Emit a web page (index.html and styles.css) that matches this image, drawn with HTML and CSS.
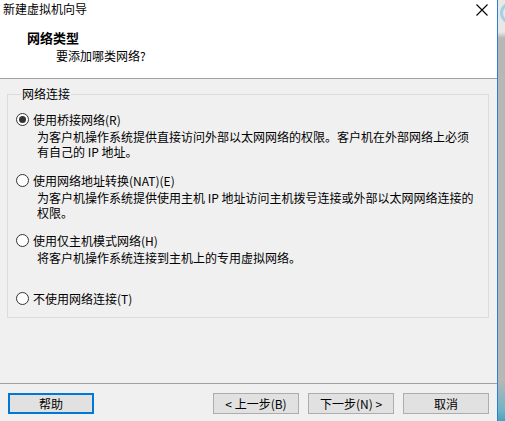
FILE: index.html
```html
<!DOCTYPE html>
<html lang="zh-CN">
<head>
<meta charset="utf-8">
<title>新建虚拟机向导</title>
<link rel="stylesheet" href="styles.css">
</head>
<body>
<div class="screen">
  <div class="window">
    <div class="header">
      <div class="titlebar">
        <span class="title">新建虚拟机向导</span>
        <span class="close">
          <svg width="12" height="12" viewBox="0 0 12 12"><path d="M0.5 0.5 L11.5 11.5 M11.5 0.5 L0.5 11.5" stroke="#000" stroke-width="1.1" fill="none"/></svg>
        </span>
      </div>
      <div class="heading">网络类型</div>
      <div class="subheading">要添加哪类网络?</div>
    </div>
    <div class="main">
      <fieldset class="group">
        <legend class="legend">网络连接</legend>
        <div class="option">
          <div class="opt-label"><span class="radio checked"></span>使用桥接网络(R)</div>
          <div class="desc">为客户机操作系统提供直接访问外部以太网网络的权限。客户机在外部网络上必须<br>有自己的 IP 地址。</div>
        </div>
        <div class="option o2">
          <div class="opt-label"><span class="radio"></span>使用网络地址转换(NAT)(E)</div>
          <div class="desc">为客户机操作系统提供使用主机 IP 地址访问主机拨号连接或外部以太网网络连接的<br>权限。</div>
        </div>
        <div class="option o3">
          <div class="opt-label"><span class="radio"></span>使用仅主机模式网络(H)</div>
          <div class="desc">将客户机操作系统连接到主机上的专用虚拟网络。</div>
        </div>
        <div class="option o4">
          <div class="opt-label"><span class="radio"></span>不使用网络连接(T)</div>
        </div>
      </fieldset>
    </div>
    <div class="footer">
      <button class="btn focused">帮助</button>
      <div class="spacer"></div>
      <button class="btn">&lt; 上一步(B)</button>
      <button class="btn">下一步(N) &gt;</button>
      <button class="btn">取消</button>
    </div>
  </div>
  <div class="desk"><div class="ring"></div></div>
</div>
</body>
</html>
```

FILE: styles.css
```css
* { box-sizing: border-box; }
html, body { margin: 0; padding: 0; }
body {
  width: 505px;
  height: 421px;
  overflow: hidden;
  font-family: "Noto Sans CJK SC", "Microsoft YaHei", sans-serif;
  font-size: 12px;
  color: #000;
}
.screen { display: flex; width: 505px; height: 421px; }
.window {
  width: 498px;
  height: 421px;
  border-right: 1px solid #2a7fd4;
  display: flex;
  flex-direction: column;
  background: #f0f0f0;
}
.header {
  height: 79px;
  background: #fff;
  border-bottom: 1px solid #a0a0a0;
}
.titlebar {
  height: 18px;
  display: flex;
  align-items: center;
  padding-left: 3px;
  padding-right: 9px;
}
.title { flex: 1; line-height: 18px; }
.close { width: 12px; height: 12px; display: flex; margin-top: 1px; }
.close svg { display: block; }
.heading {
  margin-top: 12px;
  padding-left: 27px;
  font-size: 13px;
  font-weight: bold;
  line-height: 16px;
}
.subheading {
  margin-top: 2px;
  padding-left: 56px;
  line-height: 15px;
}
.main {
  height: 304px;
  padding-top: 8px;
}
.group {
  margin: 0 8px 0 7px;
  border: 1px solid #dcdcdc;
  padding: 11px 0 11px 7px;
  min-width: 0;
}
.legend {
  padding: 0 1px;
  margin-left: 6px;
  line-height: 14px;
}
.option { }
.o2 { margin-top: 14px; }
.o3 { margin-top: 13px; }
.o4 { margin-top: 26px; }
.opt-label {
  display: flex;
  align-items: center;
  line-height: 15px;
  height: 15px;
}
.radio {
  width: 13px;
  height: 13px;
  border: 1px solid #333;
  border-radius: 50%;
  background: #fff;
  margin-right: 4px;
  margin-left: 1px;
  display: flex;
  align-items: center;
  justify-content: center;
  flex: none;
}
.radio.checked::after {
  content: "";
  width: 7px;
  height: 7px;
  border-radius: 50%;
  background: #333;
}
.desc {
  margin-top: 2px;
  padding-left: 22px;
  line-height: 15px;
  white-space: nowrap;
}
.footer {
  flex: 1;
  border-top: 1px solid #a0a0a0;
  display: flex;
  align-items: flex-start;
  padding: 9px 8px 0 8px;
  gap: 9px;
}
.spacer { flex: 1; }
.btn {
  width: 86px;
  height: 21px;
  background: #e1e1e1;
  border: 1px solid #adadad;
  font-family: "Noto Sans CJK SC", "Microsoft YaHei", sans-serif;
  font-size: 12px;
  line-height: 17px;
  color: #000;
  padding: 0;
}
.btn.focused { border: 2px solid #0078d7; }
.desk {
  flex: 1;
  position: relative;
  overflow: hidden;
  background: linear-gradient(to bottom, #e8e8e8 0, #e8e8e8 32px, #b7b7b7 38px, #b7b7b7 380px, #6fb4c6 410px, #4aa3bd 421px);
}
.ring {
  position: absolute;
  left: 2px;
  top: 2px;
  width: 22px;
  height: 22px;
  border: 3px solid #9fd3e6;
  border-radius: 50%;
}
```
